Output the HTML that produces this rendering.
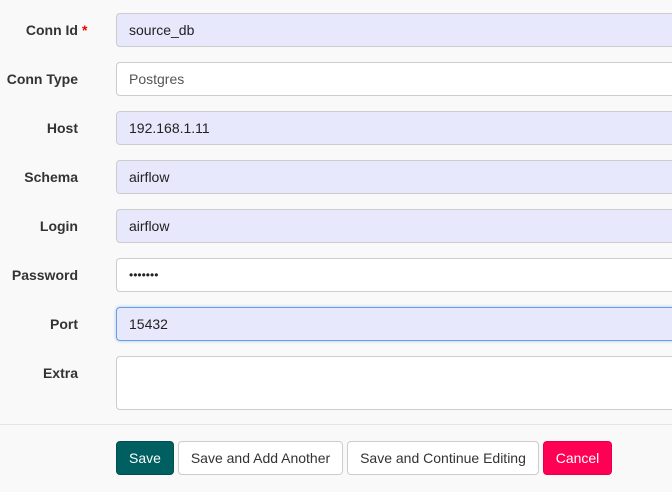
<!DOCTYPE html>
<html><head><style>
body{margin:0;width:672px;height:492px;background:#f9f9f9;font-family:"Liberation Sans",sans-serif;font-size:14px;color:#333;position:relative;overflow:hidden}
.l{position:absolute;right:594px;font-weight:bold;color:#333;text-align:right;white-space:nowrap}
.i{position:absolute;left:116px;width:570px;height:32px;border:1px solid #ccc;border-radius:4px;background:#e8e8fc;box-sizing:content-box;line-height:32px;padding-left:12px;color:#222}
.w{background:#fff}
.b{position:absolute;top:441px;height:32px;border:1px solid #ccc;border-radius:4px;background:#fff;line-height:32px;text-align:center;color:#333}
</style></head><body>
<div class="l" style="top:22px">Conn Id<span style="position:absolute;left:100%;color:#e00;padding-left:4px">*</span></div>
<div class="i" style="top:13px">source_db</div>
<div class="l" style="top:71px">Conn Type</div>
<div class="i w" style="top:62px;color:#555">Postgres</div>
<div class="l" style="top:120px">Host</div>
<div class="i" style="top:111px">192.168.1.11</div>
<div class="l" style="top:169px">Schema</div>
<div class="i" style="top:160px">airflow</div>
<div class="l" style="top:218px">Login</div>
<div class="i" style="top:209px">airflow</div>
<div class="l" style="top:267px">Password</div>
<div class="i w" style="top:258px;font-size:12px">•••••••</div>
<div class="l" style="top:316px">Port</div>
<div class="i" style="top:307px;border-color:#66a0e8;box-shadow:0 0 3px #9cc0f0">15432</div>
<div class="l" style="top:365px">Extra</div>
<div class="i w" style="top:356px;height:52px"></div>
<div style="position:absolute;left:0;right:0;top:424px;border-top:1px solid #e4e4e4"></div>
<div class="b" style="left:116px;width:56px;background:#005f61;border-color:#004f51;color:#fff">Save</div>
<div class="b" style="left:178px;width:163px">Save and Add Another</div>
<div class="b" style="left:347px;width:190px">Save and Continue Editing</div>
<div class="b" style="left:543px;width:67px;background:#ff0055;border-color:#e6004c;color:#fff">Cancel</div>
</body></html>
